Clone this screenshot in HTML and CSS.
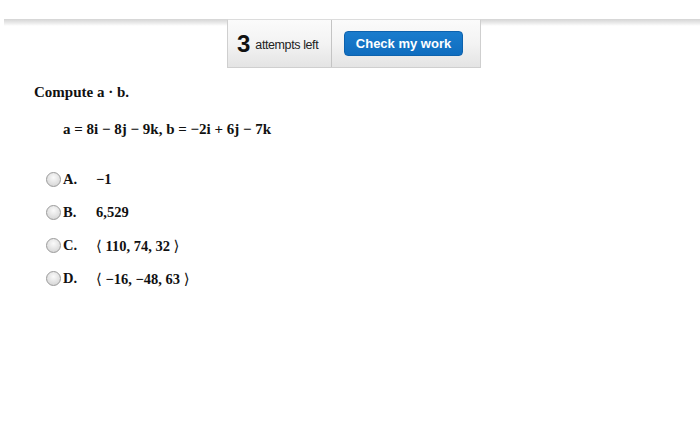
FILE: index.html
```html
<!DOCTYPE html>
<html>
<head>
<meta charset="utf-8">
<link rel="stylesheet" href="styles.css">
</head>
<body>
<div class="topbar">
  <div class="toolbox">
    <div class="attempts"><span class="num">3</span><span class="lbl">attempts left</span></div>
    <div class="check"><button class="btn">Check my work</button></div>
  </div>
</div>
<div class="question">
  <p class="prompt">Compute a · b.</p>
  <p class="eq">a = 8i − 8j − 9k, b = −2i + 6j − 7k</p>
  <ul class="options">
    <li class="opt"><span class="radio"></span><span class="letter">A.</span><span class="val">−1</span></li>
    <li class="opt"><span class="radio"></span><span class="letter">B.</span><span class="val">6,529</span></li>
    <li class="opt"><span class="radio"></span><span class="letter">C.</span><span class="val"><span class="ang">⟨</span> 110, 74, 32 <span class="ang">⟩</span></span></li>
    <li class="opt"><span class="radio"></span><span class="letter">D.</span><span class="val"><span class="ang">⟨</span> −16, −48, 63 <span class="ang">⟩</span></span></li>
  </ul>
</div>
</body>
</html>
```
FILE: styles.css
```css
html, body {
  margin: 0;
  padding: 0;
  background: #fff;
}
body {
  width: 700px;
  height: 434px;
  overflow: hidden;
  font-family: "Liberation Serif", "Times New Roman", serif;
  color: #111;
}
.topbar {
  margin-top: 19px;
  margin-left: 4px;
  background: linear-gradient(#d4d4d4, #ececec 60%, #fff) no-repeat;
  background-size: 100% 7px;
  display: flex;
}
.toolbox {
  margin-left: 223px;
  display: flex;
  height: 47px;
  border: 1px solid #cfcfcf;
  border-top-color: #dcdcdc;
  background: linear-gradient(#fbfbfb, #f3f3f3 50%, #e4e4e4);
}
.attempts {
  width: 104px;
  box-sizing: border-box;
  border-right: 1px solid #c4c4c4;
  display: flex;
  align-items: center;
  padding-left: 9px;
  font-family: "Liberation Sans", Arial, sans-serif;
}
.num {
  font-size: 24px;
  font-weight: bold;
  color: #111;
  margin-right: 5px;
}
.lbl {
  font-size: 12.5px;
  color: #222;
  letter-spacing: -0.4px;
  padding-top: 2px;
}
.check {
  display: flex;
  align-items: center;
  padding-left: 12px;
  padding-right: 17px;
}
.btn {
  width: 119px;
  height: 25px;
  border: 1px solid #0d62ad;
  border-radius: 4px;
  background: linear-gradient(#1a7ccd, #0f6dbf);
  color: #fff;
  font-family: "Liberation Sans", Arial, sans-serif;
  font-weight: bold;
  font-size: 13px;
  padding: 0;
}
.question {
  padding-left: 34px;
}
.prompt {
  margin: 15px 0 0;
  font-size: 15px;
  font-weight: bold;
  line-height: 18px;
}
.eq {
  margin: 19px 0 0 29px;
  font-size: 15px;
  font-weight: bold;
  line-height: 18px;
}
.options {
  list-style: none;
  margin: 25px 0 0 12px;
  padding: 0;
}
.opt {
  display: flex;
  align-items: center;
  height: 33px;
  font-size: 14.5px;
  font-weight: bold;
}
.radio {
  width: 13px;
  height: 13px;
  border-radius: 50%;
  border: 1px solid #9a9a9a;
  background: radial-gradient(circle at 50% 35%, #fafafa, #dcdcdc 70%, #c8c8c8);
  margin-right: 2px;
}
.letter {
  width: 33px;
}
.val {
  white-space: pre;
}
.ang {
  font-family: "DejaVu Serif", serif;
  font-weight: normal;
  font-size: 15px;
}
```
